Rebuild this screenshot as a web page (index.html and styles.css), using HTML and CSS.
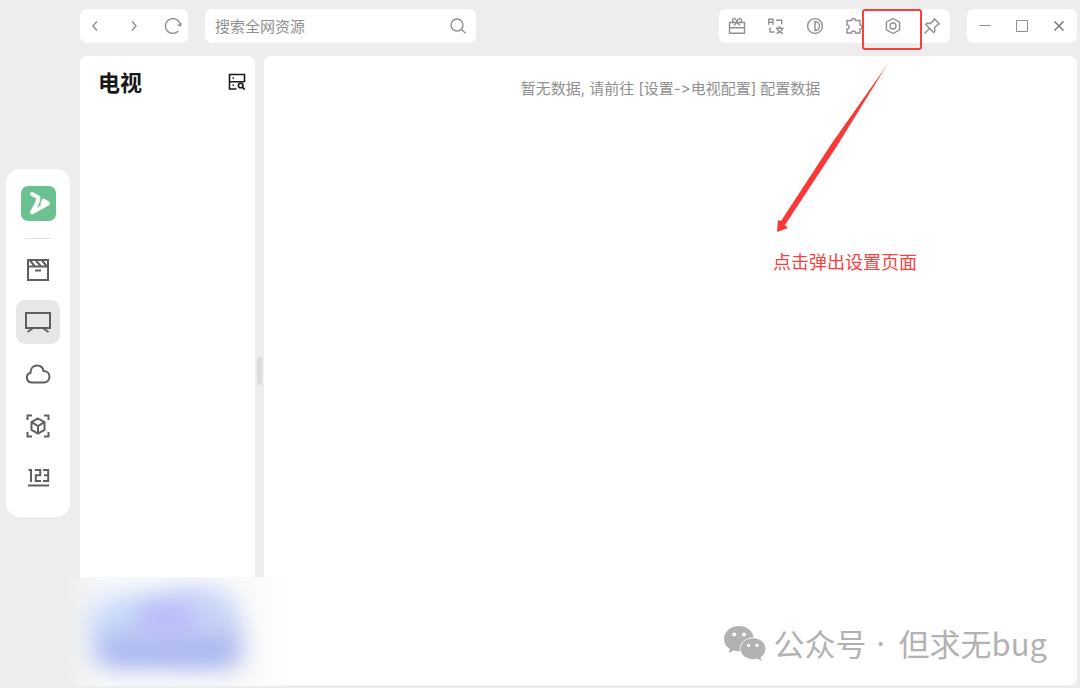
FILE: index.html
```html
<!DOCTYPE html>
<html lang="zh-CN">
<head>
<meta charset="utf-8">
<meta name="viewport" content="width=device-width, initial-scale=1">
<title>电视</title>
<link rel="stylesheet" href="styles.css">
</head>
<body>
<div class="app">
  <aside class="rail">
    <nav class="rail-card" aria-label="主导航">
      <svg class="logo" viewBox="0 0 35 35" aria-hidden="true">
        <rect width="35" height="35" rx="7" fill="#6bc290"/>
        <path d="M11 8L17.500 11.500L16.500 16L11 26.500L27 17.500L22.500 14.500L21.500 18" fill="none" stroke="#fff" stroke-width="4" stroke-linecap="round" stroke-linejoin="round"/>
      </svg>
      <hr class="rail-line">
      <button class="rail-item" type="button" aria-label="影视">
        <svg viewBox="0 0 26 26"><path d="M3 3h20v20H3zM3 9.500h20M5 3.500l5 6M11 3.500l5 6M17 3.500l5 6M10 13.500h6"/></svg>
      </button>
      <button class="rail-item active" type="button" aria-label="电视">
        <svg viewBox="0 0 26 26"><path d="M1 4h24v15H1zM7.500 19.500l-5 3.500M18.500 19.500l5 3.500"/></svg>
      </button>
      <button class="rail-item" type="button" aria-label="网盘">
        <svg viewBox="0 0 26 26"><path d="M7 21.500a5 5 0 0 1-1.500-9.800C5.500 7 8.500 4.500 12 4.500c3.500 0 6 2.300 6.500 5.500 3.500 0 6 2.500 6 5.700 0 3.300-2.500 5.800-5.500 5.800z"/></svg>
      </button>
      <button class="rail-item" type="button" aria-label="解析">
        <svg viewBox="0 0 26 26"><path d="M2.500 7V2.500H7M19 2.500h4.500V7M23.500 19v4.500H19M7 23.500H2.500V19M13 5.500l6.500 3.700v7.600L13 20.500l-6.500-3.700V9.200zM6.500 9.200l6.500 3.800 6.500-3.800M13 13v7.500"/></svg>
      </button>
      <button class="rail-item" type="button" aria-label="实验室">
        <svg viewBox="0 0 26 26"><path d="M3.500 5h2.500v12M10 5h5.200v5.300h-4.400v5.700h5.200M18 5h5.200v11H18M19 10.300h4M3 20.500h21" /></svg>
      </button>
    </nav>
  </aside>

  <div class="workspace">
    <header class="topbar">
      <div class="bar nav-bar">
        <button class="icon-btn" type="button" aria-label="后退"><svg viewBox="0 0 18 18"><path d="M11 4.500L7 9l4 4.500"/></svg></button>
        <button class="icon-btn" type="button" aria-label="前进"><svg viewBox="0 0 18 18"><path d="M7 4.500L11 9l-4 4.500"/></svg></button>
        <button class="icon-btn" type="button" aria-label="刷新"><svg viewBox="0 0 18 18"><path d="M14.300 14A7.400 7.400 0 1 1 16.300 8.800M13.600 7.700l2.700 1.100 1-2.600"/></svg></button>
      </div>
      <form class="bar search">
        <input class="search-input" type="text" placeholder="搜索全网资源" aria-label="搜索全网资源">
        <button class="icon-btn" type="button" aria-label="搜索"><svg viewBox="0 0 18 18"><circle cx="8" cy="8" r="6"/><path d="M12.300 12.300l4.200 4"/></svg></button>
      </form>
      <div class="bar tools">
        <button class="icon-btn" type="button" aria-label="福利"><svg viewBox="0 0 18 18"><path d="M1.500 5.500h15v10.700h-15zM1.500 10.700h15M9 5.500C5 6 4 4 4.500 2.700 5.500.5 9 1.500 9 5.500c0-4 3.500-5 4.500-2.800C14 4 13 6 9 5.500M9 5.500L6 8.300M9 5.500l3 2.800"/></svg></button>
        <button class="icon-btn" type="button" aria-label="语言"><svg viewBox="0 0 18 18"><path d="M1.700 7.800V2.300H6v5.500M1.700 5.300H6M9 3.300h5.700v4M3 10.500V15h4.500M12.500 9v2M9 11.200h7.500M10 11.500c1 2.500 3 4 6 5M15.500 11.500c-1 2.500-3 4-6 5"/></svg></button>
        <button class="icon-btn" type="button" aria-label="主题"><svg viewBox="0 0 18 18"><circle cx="9" cy="9" r="7.400"/><path d="M9 4.500v9a4.500 4.500 0 0 0 0-9z"/></svg></button>
        <button class="icon-btn" type="button" aria-label="插件"><svg viewBox="0 0 18 18"><path d="M2 3.500h4.500a2 2 0 0 1 4 0H15V8a2 2 0 0 1 0 4v4h-4.500a2 2 0 0 0-4 0H2v-4a2 2 0 0 0 0-4z"/></svg></button>
        <button class="icon-btn" type="button" aria-label="设置"><svg viewBox="0 0 18 18"><path d="M9 1.500l6.600 3.700v7.600L9 16.500l-6.600-3.700V5.200z"/><circle cx="9" cy="9" r="3"/></svg><span class="highlight"></span></button>
        <button class="icon-btn" type="button" aria-label="置顶"><svg viewBox="0 0 18 18"><path d="M11.300 1.800l5 5-1.600.7-3.100 3.200.2 3.600-1.200 1.200-7.900-7.900 1.200-1.300 3.600.2 3.200-3.200zM6.500 11.500L1.500 16.500"/></svg></button>
      </div>
      <div class="bar window-bar">
        <button class="icon-btn" type="button" aria-label="最小化"><svg class="thin" viewBox="0 0 18 18"><path d="M3.500 8.500h11"/></svg></button>
        <button class="icon-btn" type="button" aria-label="最大化"><svg class="thin" viewBox="0 0 18 18"><path d="M3.500 3.500h11v11h-11z"/></svg></button>
        <button class="icon-btn" type="button" aria-label="关闭"><svg class="close" viewBox="0 0 18 18"><path d="M4.500 4.500l9 9M13.500 4.500l-9 9"/></svg></button>
      </div>
    </header>

    <div class="panels">
      <section class="channels">
        <div class="channels-head">
          <h1 class="title">电视</h1>
          <button class="channel-search" type="button" aria-label="搜索频道"><svg viewBox="0 0 18 18"><path d="M8.500 17H1.500V2.500h15V10M1.500 9.700h15M4.500 6h1.500M4.500 13.300h1.500"/><circle cx="12.700" cy="13.500" r="2.300"/><path d="M14.300 15.100l2.500 2.500"/></svg></button>
        </div>
      </section>
      <div class="splitter"><span class="grip"></span></div>
      <main class="content">
        <p class="empty">暂无数据, 请前往 [设置-&gt;电视配置] 配置数据</p>
        <div class="callout">
          <svg class="arrow" viewBox="0 0 112 168" aria-hidden="true"><path d="M110 0L55 78L4 156L1 155L0 167L11 163L8 160L60 81Z" fill="#fb3838"/></svg>
          <span class="callout-text">点击弹出设置页面</span>
        </div>
      </main>
    </div>
  </div>

  <div class="blurred" aria-hidden="true"><span class="blob sky"></span><span class="blob side"></span><span class="blob base"></span><span class="blob top"></span></div>

  <div class="watermark">
    <svg class="wechat" viewBox="0 0 42 35" aria-hidden="true">
      <path d="M15 0C6.500 0 0 5.600 0 13c0 4.200 2.200 7.700 5.800 10L4.600 27l5.200-2.500c1.600.5 3.400.8 5.200.8h1.100C14.500 17.500 21 11.500 29.700 11.300 28.500 4.700 22.500 0 15 0z" fill="#b2b2b2"/>
      <path d="M29 12.300c-7 0-12.500 4.700-12.500 10.500S22 33.200 29 33.200c1.500 0 2.900-.2 4.200-.6L37.500 35l-1-3.800c3-1.900 4.900-5 4.900-8.400C41.400 17 36 12.300 29 12.300z" fill="#b2b2b2"/>
      <g fill="#fff"><circle cx="10.200" cy="8.500" r="2"/><circle cx="20" cy="8.500" r="2"/><circle cx="24.700" cy="19.300" r="1.600"/><circle cx="33" cy="19.300" r="1.600"/></g>
    </svg>
    <span>公众号</span><span class="dot">·</span><span>但求无bug</span>
  </div>
</div>
</body>
</html>
```
FILE: styles.css
```css
* { box-sizing: border-box; }

body {
  margin: 0;
  background: #ededed;
  color: #181818;
  font-family: "Noto Sans CJK SC", sans-serif;
}

button {
  position: relative;
  display: flex;
  align-items: center;
  justify-content: center;
  padding: 0;
  border: 0;
  background: none;
  color: inherit;
}

svg {
  display: block;
  fill: none;
  stroke: currentColor;
}

.app {
  position: relative;
  display: flex;
  min-height: 100vh;
  overflow: hidden;
}

.rail {
  flex: none;
  display: flex;
  align-items: center;
  padding: 0 10px 2px 6px;
}

.rail-card {
  display: flex;
  flex-direction: column;
  align-items: center;
  gap: 8px;
  width: 64px;
  padding: 17px 0;
  border-radius: 14px;
  background: #fff;
}

.logo {
  width: 35px;
  height: 35px;
  stroke: none;
}

.rail-line {
  width: 26px;
  height: 1px;
  margin: 9px 0 1px;
  border: 0;
  background: #e2e2e2;
}

.rail-item {
  width: 44px;
  height: 44px;
  border-radius: 9px;
  color: #5f5f62;
}

.rail-item.active { background: #e7e7e7; }

.rail-item svg {
  width: 26px;
  height: 26px;
  stroke-width: 2;
}

.workspace {
  flex: 1;
  min-width: 0;
  display: flex;
  flex-direction: column;
  gap: 13px;
  padding: 9px 3px 3px 0;
}

.topbar {
  display: flex;
  gap: 17px;
}

.bar {
  display: flex;
  align-items: center;
  height: 34px;
  border-radius: 7px;
  background: #fff;
  color: #909090;
}

.icon-btn {
  width: 18px;
  height: 18px;
}

.icon-btn svg {
  width: 18px;
  height: 18px;
  stroke-width: 1.4;
}

.icon-btn .thin { stroke-width: 1; }

.icon-btn .close { color: #707070; }

.nav-bar {
  gap: 21px;
  padding: 0 6px;
}

.search {
  width: 271px;
  padding: 0 9px 0 10px;
}

.search-input {
  flex: 1;
  min-width: 0;
  padding: 0 0 2px;
  border: 0;
  outline: 0;
  background: none;
  color: #181818;
  font: inherit;
  font-size: 15px;
}

.search-input::placeholder {
  color: #909090;
  opacity: 1;
}

.tools {
  gap: 21px;
  margin-left: auto;
  padding: 0 9px;
}

.highlight {
  position: absolute;
  top: -8px;
  left: -22px;
  width: 60px;
  height: 41px;
  border: 2px solid #fb3f3f;
  border-radius: 3px;
}

.window-bar {
  gap: 19px;
  padding: 0 9px;
}

.panels {
  flex: 1;
  display: flex;
}

.channels {
  width: 175px;
  padding: 9px 9px 10px 18px;
  border-radius: 7px;
  background: #fff;
}

.channels-head {
  display: flex;
  align-items: center;
  justify-content: space-between;
}

.title {
  margin: 0;
  font-size: 22px;
  line-height: 32px;
  font-weight: 700;
}

.channel-search svg {
  width: 18px;
  height: 20px;
  stroke-width: 1.6;
}

.splitter {
  display: flex;
  align-items: center;
  justify-content: center;
  width: 9px;
}

.grip {
  width: 5px;
  height: 28px;
  border-radius: 2px;
  background: #dcdcdc;
}

.content {
  position: relative;
  flex: 1;
  padding: 22px 0;
  border-radius: 7px;
  background: #fff;
}

.empty {
  margin: 0;
  color: #909090;
  font-family: Inter, "Noto Sans CJK SC", sans-serif;
  font-feature-settings: "calt" 0;
  font-size: 15px;
  line-height: 22px;
  text-align: center;
}

.callout {
  position: absolute;
  top: 9px;
  right: 160px;
  display: flex;
  flex-direction: column;
  gap: 14px;
}

.arrow {
  width: 112px;
  height: 168px;
  margin-left: 4px;
  stroke: none;
}

.callout-text {
  color: #fb3f3f;
  font-size: 18px;
  line-height: 28px;
}

.blurred {
  position: absolute;
  left: 69px;
  bottom: 2px;
  width: 214px;
  height: 109px;
  overflow: hidden;
  background: linear-gradient(90deg, #efefef, #f9fafb 16%, #fafafa 84%, #fefefe);
}

.blob {
  position: absolute;
  border-radius: 30px;
  filter: blur(12px);
}

.sky {
  top: 18px;
  left: 18px;
  width: 150px;
  height: 62px;
  background: #cbdcf9;
}

.side {
  top: 14px;
  left: 92px;
  width: 74px;
  height: 66px;
  background: #ccd6f8;
}

.base {
  top: 58px;
  left: 28px;
  width: 144px;
  height: 32px;
  border-radius: 12px;
  background: #a9b6ee;
}

.top {
  top: 24px;
  left: 64px;
  width: 64px;
  height: 38px;
  background: #b9bcf8;
}

.watermark {
  position: absolute;
  right: 33px;
  bottom: 22px;
  display: flex;
  align-items: center;
  color: #b2b2b2;
  font-size: 31px;
  line-height: 46px;
}

.wechat {
  width: 42px;
  height: 35px;
  margin-right: 8px;
  stroke: none;
}

.dot {
  width: 32px;
  padding-right: 4px;
  font-family: "Noto Sans", sans-serif;
  text-align: center;
}
```
